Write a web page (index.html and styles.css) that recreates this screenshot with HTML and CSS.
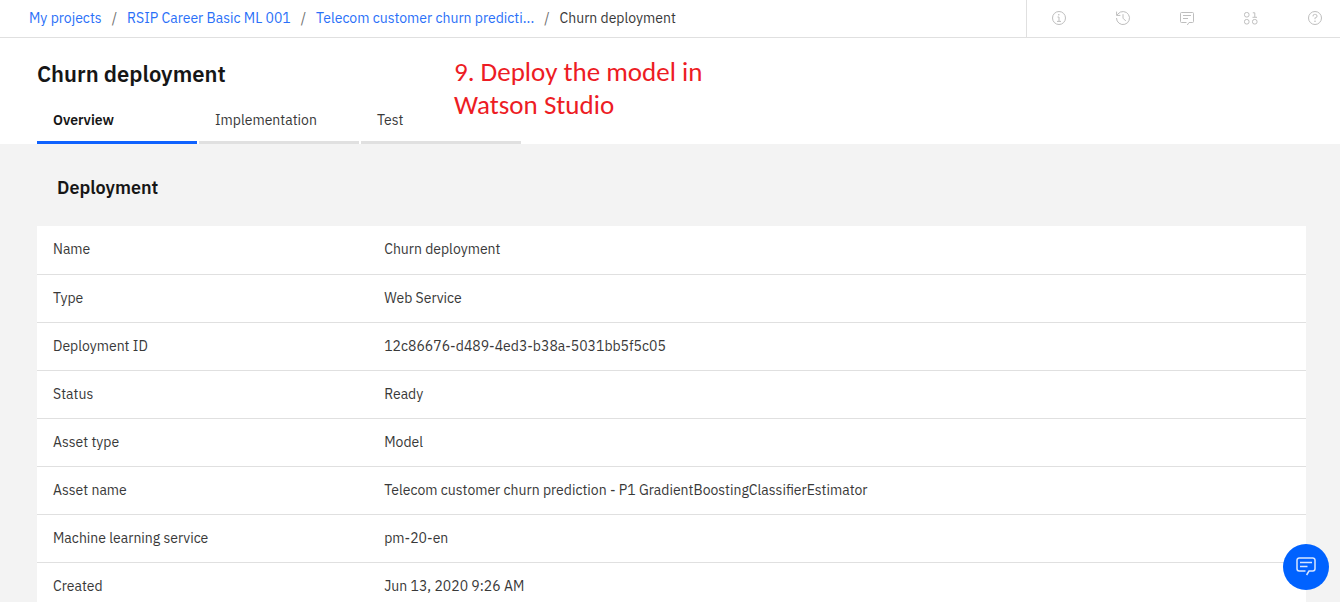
FILE: index.html
```html
<!DOCTYPE html>
<html lang="en">
<head>
<meta charset="utf-8">
<meta name="viewport" content="width=device-width, initial-scale=1">
<title>Churn deployment</title>
<link rel="stylesheet" href="styles.css">
</head>
<body>
<div class="app">
  <header class="topbar">
    <nav class="breadcrumb" aria-label="Breadcrumb">
      <a href="#projects">My projects</a>
      <span class="slash">/</span>
      <a href="#career">RSIP Career Basic ML 001</a>
      <span class="slash">/</span>
      <a href="#model">Telecom customer churn predicti...</a>
      <span class="slash">/</span>
      <span class="current">Churn deployment</span>
    </nav>
    <div class="tools">
      <button class="tool" type="button" aria-label="Information">
        <svg class="icon" viewBox="0 0 16 16"><circle cx="8" cy="8" r="6.5"/><path d="M6.5 7H8v4.2M6 11.4h4"/><circle class="dot" cx="7.8" cy="4.7" r=".8"/></svg>
      </button>
      <button class="tool" type="button" aria-label="History">
        <svg class="icon" viewBox="0 0 16 16"><path d="M1.5 8A6.5 6.5 0 1 0 3 3.9L1.8 5.2M1.6 1.6v3.8h3.8M8 4.2v4l2.8 2.8"/></svg>
      </button>
      <button class="tool" type="button" aria-label="Comments">
        <svg class="icon" viewBox="0 0 16 16"><path d="M7.5 12.5H2.5A1 1 0 0 1 1.5 11.5V3.5A1 1 0 0 1 2.5 2.5h11A1 1 0 0 1 14.5 3.5v8a1 1 0 0 1-1 1H10l-1.7 2.5M4 5.5h8M4 8.5h5"/></svg>
      </button>
      <button class="tool" type="button" aria-label="Data">
        <svg class="icon" viewBox="0 0 16 16"><rect x="1.5" y="2.5" width="4.5" height="4.5" rx="1.9"/><rect x="1.5" y="9.5" width="4.5" height="4.5" rx="1.9"/><rect x="9.5" y="9.5" width="4.5" height="4.5" rx="1.9"/><path d="M9.8 2.8h2v4.2M9.5 7.3h4.5"/></svg>
      </button>
      <button class="tool" type="button" aria-label="Help">
        <svg class="icon" viewBox="0 0 16 16"><circle cx="8" cy="8" r="6.5"/><path d="M6 6.4V6a1.6 1.6 0 0 1 1.6-1.6h.8a1.6 1.6 0 0 1 0 3.3H8v1.5"/><circle class="dot" cx="8" cy="11.3" r=".8"/></svg>
      </button>
    </div>
  </header>

  <section class="heading">
    <h1 class="title">Churn deployment</h1>
    <div class="tabs" role="tablist">
      <button class="tab selected" type="button" role="tab" aria-selected="true">Overview</button>
      <button class="tab" type="button" role="tab" aria-selected="false">Implementation</button>
      <button class="tab" type="button" role="tab" aria-selected="false">Test</button>
    </div>
    <p class="note">9. Deploy the model in<br>Watson Studio</p>
  </section>

  <main class="content">
    <h2 class="subtitle" id="details">Deployment</h2>
    <table class="details" aria-labelledby="details">
      <tbody>
        <tr><th scope="row">Name</th><td>Churn deployment</td></tr>
        <tr><th scope="row">Type</th><td>Web Service</td></tr>
        <tr><th scope="row">Deployment ID</th><td>12c86676-d489-4ed3-b38a-5031bb5f5c05</td></tr>
        <tr><th scope="row">Status</th><td>Ready</td></tr>
        <tr><th scope="row">Asset type</th><td>Model</td></tr>
        <tr><th scope="row">Asset name</th><td>Telecom customer churn prediction - P1 GradientBoostingClassifierEstimator</td></tr>
        <tr><th scope="row">Machine learning service</th><td>pm-20-en</td></tr>
        <tr><th scope="row">Created</th><td>Jun 13, 2020 9:26 AM</td></tr>
      </tbody>
    </table>
  </main>

  <button class="chat" type="button" aria-label="Open chat">
    <svg class="chat-icon" viewBox="0 0 20 20"><path d="M9.5 14H3.2A2.2 2.2 0 0 1 1 11.8V3.2A2.2 2.2 0 0 1 3.2 1h13.6A2.2 2.2 0 0 1 19 3.2v8.6a2.2 2.2 0 0 1-2.2 2.2H13l-2.4 4M4 5.5h12M4 9.500h7.5"/></svg>
  </button>
</div>
</body>
</html>
```
FILE: styles.css
```css
* { box-sizing: border-box; }

body {
  margin: 0;
  background: #f3f3f3;
  color: #393939;
  font-family: "IBM Plex Sans", Inter, "Liberation Sans", sans-serif;
  font-size: 14px;
  line-height: 20px;
}

button {
  margin: 0;
  padding: 0;
  border: 0;
  background: none;
  font: inherit;
  color: inherit;
  cursor: pointer;
}

.app {
  display: flex;
  flex-direction: column;
  height: 100vh;
}

.topbar {
  display: flex;
  flex: none;
  justify-content: space-between;
  height: 38px;
  background: #fff;
  border-bottom: 1px solid #e0e0e0;
}

.breadcrumb {
  display: flex;
  align-items: center;
  gap: 10px;
  padding: 0 0 2px 29px;
  white-space: nowrap;
}

.breadcrumb a { color: #2a70f8; text-decoration: none; }
.breadcrumb a:hover { text-decoration: underline; }
.slash { color: #6f6f6f; }

.tools {
  display: flex;
  border-left: 1px solid #e0e0e0;
}

.tool {
  display: flex;
  align-items: center;
  justify-content: center;
  width: 64px;
  padding-bottom: 1px;
}

.tool:last-child {
  width: 57px;
  padding-left: 24px;
  justify-content: flex-start;
}

.icon {
  width: 16px;
  height: 16px;
  fill: none;
  stroke: #bebebe;
}

.icon .dot { fill: #bebebe; stroke: none; }

.heading {
  position: relative;
  flex: none;
  padding: 22px 34px 0 37px;
  background: #fff;
}

.title {
  margin: 0 0 12px;
  color: #161616;
  font-size: 22px;
  font-weight: 600;
  line-height: 28px;
}

.tabs { display: flex; gap: 2px; }

.tab {
  width: 160px;
  height: 44px;
  padding: 0 16px 1px;
  border-bottom: 3px solid #e0e0e0;
  text-align: left;
}

.tab.selected {
  border-color: #0f62fe;
  color: #161616;
  font-weight: 600;
}

.note {
  position: absolute;
  top: 17px;
  left: 454px;
  margin: 0;
  color: #ed1c24;
  font-family: Calibri, Carlito, "Open Sans", sans-serif;
  font-size: 27px;
  line-height: 33px;
}

.content {
  flex: 1;
  min-height: 0;
  padding: 32px 34px 0 37px;
  overflow: auto;
  scrollbar-width: none;
}

.subtitle {
  margin: 0 0 26px;
  padding-left: 20px;
  color: #161616;
  font-size: 18px;
  font-weight: 600;
  line-height: 24px;
}

.details {
  width: 100%;
  border-collapse: separate;
  border-spacing: 0;
  background: #fff;
}

.details th,
.details td {
  height: 48px;
  padding: 0 16px 2px;
  border-bottom: 1px solid #e0e0e0;
  font-weight: 400;
  text-align: left;
}

.details tr:first-child > * { height: 49px; }
.details th { width: 26.1%; }

.chat {
  position: fixed;
  right: 11px;
  bottom: 12px;
  display: flex;
  align-items: center;
  justify-content: center;
  width: 46px;
  height: 46px;
  border-radius: 50%;
  background: #0062ff;
}

.chat-icon {
  width: 20px;
  height: 20px;
  fill: none;
  stroke: #d8e6ff;
  stroke-width: 1.5;
}
```
